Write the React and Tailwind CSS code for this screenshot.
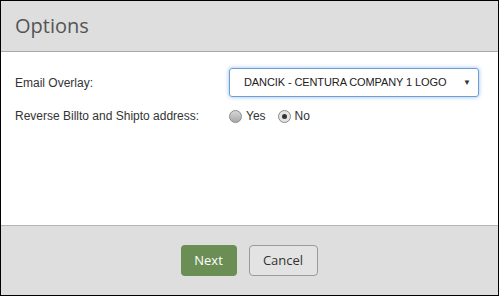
export default function App() {
  return (
    <div className="w-[499px] h-[296px] border border-black bg-white flex flex-col font-['Liberation_Sans',sans-serif]">
      {/* Header */}
      <div className="h-[51px] bg-[#dedede] border-b border-[#a9a9a9] flex items-center px-[14px]">
        <h1 className="font-['Open_Sans',sans-serif] text-[20px] text-[#555] leading-none">Options</h1>
      </div>

      {/* Body */}
      <div className="flex-1 pt-[16px] text-[12px] text-[#333]">
        <div className="flex items-center h-[29px]">
          <label className="w-[228px] pl-[14px]">Email Overlay:</label>
          <div className="relative w-[250px] h-[29px] border border-[#6b9fd8] rounded-[3px] shadow-[0_0_4px_rgba(80,140,220,0.6)] flex items-center pl-[14px]">
            <span className="text-[#222] text-[11px] tracking-[-0.1px]">DANCIK - CENTURA COMPANY 1 LOGO</span>
            <span className="absolute right-[7px] top-[8px] text-[8px] text-[#333]">▼</span>
          </div>
        </div>
        <div className="flex items-center h-[20px] mt-[9px]">
          <label className="w-[228px] pl-[14px]">Reverse Billto and Shipto address:</label>
          <div className="flex items-center">
            <span className="w-[13px] h-[13px] rounded-full border border-[#8a8a8a] bg-[linear-gradient(#d6d6d6,#a9a9a9)]"></span>
            <span className="ml-[4px]">Yes</span>
            <span className="ml-[12px] w-[13px] h-[13px] rounded-full border border-[#8a8a8a] bg-[#e4e4e4] flex items-center justify-center">
              <span className="w-[5px] h-[5px] rounded-full bg-[#333]"></span>
            </span>
            <span className="ml-[4px]">No</span>
          </div>
        </div>
      </div>

      {/* Footer */}
      <div className="h-[70px] bg-[#dedede] border-t border-[#b5b5b5] flex items-center justify-center gap-[12px] pr-[1px] font-['Open_Sans',sans-serif] text-[13px]">
        <button className="w-[56px] h-[31px] rounded-[4px] bg-[#6b8e55] text-white">Next</button>
        <button className="w-[69px] h-[31px] rounded-[4px] border border-[#9a9a9a] bg-[#e3e3e3] text-[#333]">Cancel</button>
      </div>
    </div>
  );
}
